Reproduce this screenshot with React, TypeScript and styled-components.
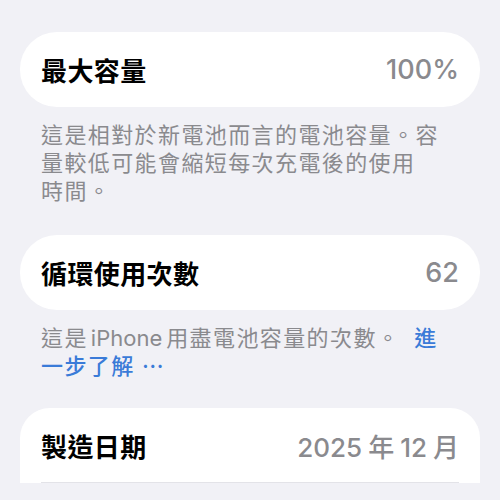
import React from "react";
import styled, { createGlobalStyle } from "styled-components";

const Global = createGlobalStyle`
  html, body { margin: 0; padding: 0; background: #f1f1f6; }
  body { font-family: "Inter", "Noto Sans CJK TC", sans-serif; -webkit-font-smoothing: antialiased; }
`;

const Page = styled.div`
  width: 500px;
  height: 500px;
  overflow: hidden;
  background: #f1f1f6;
  padding: 32px 20px 0;
  box-sizing: border-box;
  display: flex;
  flex-direction: column;
`;

const Card = styled.div<{ $open?: boolean }>`
  background: #ffffff;
  border-radius: ${(p) => (p.$open ? "30px 30px 0 0" : "37px")};
  padding: 0 21px;
  display: flex;
  flex-direction: column;
`;

const Row = styled.div<{ $divider?: boolean }>`
  height: 75px;
  display: flex;
  align-items: center;
  justify-content: space-between;
  box-sizing: border-box;
  border-bottom: ${(p) => (p.$divider ? "1px solid #e3e3e8" : "none")};
`;

const Label = styled.span`
  font-size: 26px;
  font-weight: 600;
  color: #000;
  letter-spacing: 0.4px;
`;

const Value = styled.span<{ $size?: number }>`
  font-size: ${(p) => p.$size ?? 27}px;
  font-weight: 500;
  color: #8a8a8e;
`;

const Unit = styled.span<{ $right?: number }>`
  margin-left: 6px;
  margin-right: ${(p) => p.$right ?? 0}px;
`;

const Footnote = styled.p<{ $gap?: number }>`
  margin: 14px 21px ${(p) => p.$gap ?? 30}px;
  font-family: "Inter", "Noto Sans CJK TC", sans-serif;
  font-size: 22px;
  line-height: 28px;
  color: #8a8a8e;
  letter-spacing: 1.4px;
`;

const Latin = styled.span`
  letter-spacing: 0;
  margin: 0 4px 0 3px;
`;

const Link = styled.span<{ $lead?: number }>`
  color: #3a7bd8;
  font-weight: 500;
  margin-left: ${(p) => p.$lead ?? 0}px;
`;

export default function App() {
  return (
    <>
      <Global />
      <Page>
        <Card>
          <Row>
            <Label>最大容量</Label>
            <Value>100%</Value>
          </Row>
        </Card>
        <Footnote>
          這是相對於新電池而言的電池容量。容
          <br />
          量較低可能會縮短每次充電後的使用
          <br />
          時間。
        </Footnote>
        <Card>
          <Row>
            <Label>循環使用次數</Label>
            <Value>62</Value>
          </Row>
        </Card>
        <Footnote $gap={28}>
          這是<Latin>iPhone</Latin>用盡電池容量的次數。<Link $lead={14}>進</Link>
          <br />
          <Link>一步了解 ⋯</Link>
        </Footnote>
        <Card $open>
          <Row $divider>
            <Label>製造日期</Label>
            <Value $size={26}>
              2025<Unit $right={6}>年</Unit>12<Unit>月</Unit>
            </Value>
          </Row>
        </Card>
      </Page>
    </>
  );
}
